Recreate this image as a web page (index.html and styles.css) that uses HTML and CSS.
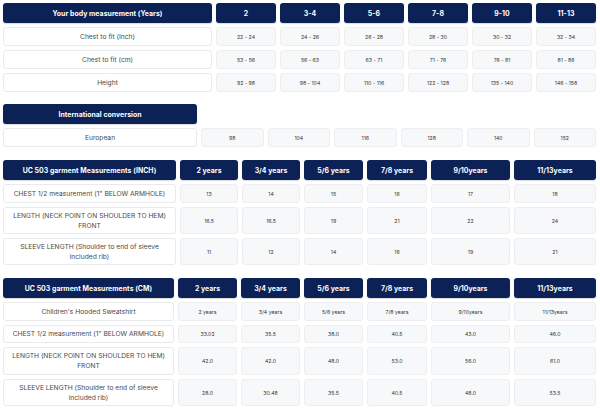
FILE: index.html
```html
<!DOCTYPE html>
<html>
<head>
<meta charset="utf-8">
<link rel="stylesheet" href="styles.css">
</head>
<body>
<div class="page">
  <div class="tbl t1">
    <div class="c h">Your body measurement (Years)</div>
    <div class="c h">2</div><div class="c h">3-4</div><div class="c h">5-6</div><div class="c h">7-8</div><div class="c h">9-10</div><div class="c h">11-13</div>
    <div class="c l">Chest to fit (Inch)</div>
    <div class="c v">22 - 24</div><div class="c v">24 - 26</div><div class="c v">26 - 28</div><div class="c v">28 - 30</div><div class="c v">30 - 32</div><div class="c v">32 - 34</div>
    <div class="c l">Chest to fit (cm)</div>
    <div class="c v">53 - 56</div><div class="c v">56 - 63</div><div class="c v">63 - 71</div><div class="c v">71 - 76</div><div class="c v">76 - 81</div><div class="c v">81 - 86</div>
    <div class="c l">Height</div>
    <div class="c v">92 - 98</div><div class="c v">98 - 104</div><div class="c v">110 - 116</div><div class="c v">122 - 128</div><div class="c v">135 - 140</div><div class="c v">146 - 158</div>
  </div>

  <div class="tbl t2">
    <div class="c h">International conversion</div>
    <div class="blank"></div><div class="blank"></div><div class="blank"></div><div class="blank"></div><div class="blank"></div><div class="blank"></div>
    <div class="c l">European</div>
    <div class="c v">98</div><div class="c v">104</div><div class="c v">116</div><div class="c v">128</div><div class="c v">140</div><div class="c v">152</div>
  </div>

  <div class="tbl t3">
    <div class="c h">UC 503 garment Measurements (INCH)</div>
    <div class="c h">2 years</div><div class="c h">3/4 years</div><div class="c h">5/6 years</div><div class="c h">7/8 years</div><div class="c h">9/10years</div><div class="c h">11/13years</div>
    <div class="c l">CHEST 1/2 measurement (1" BELOW ARMHOLE)</div>
    <div class="c v">13</div><div class="c v">14</div><div class="c v">15</div><div class="c v">16</div><div class="c v">17</div><div class="c v">18</div>
    <div class="c l two">LENGTH (NECK POINT ON SHOULDER TO HEM)<br>FRONT</div>
    <div class="c v">16.5</div><div class="c v">16.5</div><div class="c v">19</div><div class="c v">21</div><div class="c v">22</div><div class="c v">24</div>
    <div class="c l two">SLEEVE LENGTH (Shoulder to end of sleeve<br>included rib)</div>
    <div class="c v">11</div><div class="c v">12</div><div class="c v">14</div><div class="c v">16</div><div class="c v">19</div><div class="c v">21</div>
  </div>

  <div class="tbl t4">
    <div class="c h">UC 503 garment Measurements (CM)</div>
    <div class="c h">2 years</div><div class="c h">3/4 years</div><div class="c h">5/6 years</div><div class="c h">7/8 years</div><div class="c h">9/10years</div><div class="c h">11/13years</div>
    <div class="c l">Children's Hooded Sweatshirt</div>
    <div class="c v">2 years</div><div class="c v">3/4 years</div><div class="c v">5/6 years</div><div class="c v">7/8 years</div><div class="c v">9/10years</div><div class="c v">11/13years</div>
    <div class="c l">CHEST 1/2 measurement (1" BELOW ARMHOLE)</div>
    <div class="c v">33.02</div><div class="c v">35.5</div><div class="c v">38.0</div><div class="c v">40.5</div><div class="c v">43.0</div><div class="c v">46.0</div>
    <div class="c l two">LENGTH (NECK POINT ON SHOULDER TO HEM)<br>FRONT</div>
    <div class="c v">42.0</div><div class="c v">42.0</div><div class="c v">48.0</div><div class="c v">53.0</div><div class="c v">56.0</div><div class="c v">61.0</div>
    <div class="c l two">SLEEVE LENGTH (Shoulder to end of sleeve<br>included rib)</div>
    <div class="c v">28.0</div><div class="c v">30.48</div><div class="c v">35.5</div><div class="c v">40.5</div><div class="c v">48.0</div><div class="c v">53.5</div>
  </div>
</div>
</body>
</html>
```

FILE: styles.css
```css
* { box-sizing: border-box; }
html, body { margin: 0; padding: 0; background: #ffffff; }
body { font-family: Inter, "Liberation Sans", sans-serif; }
.page {
  width: 600px;
  padding: 3px 4px 0 3px;
  display: flex;
  flex-direction: column;
}
.tbl {
  display: grid;
  gap: 4px;
  width: 593px;
}
.t1 {
  grid-template-columns: 209px repeat(6, 60px);
  grid-template-rows: 20px 19px 19px 19px;
}
.t2 {
  margin-top: 12px;
  grid-template-columns: 194px repeat(6, 1fr);
  grid-template-rows: 20px 19px;
}
.t3 {
  margin-top: 13px;
  grid-template-columns: 173px 58px 58px 59px 60px 79px 82px;
  grid-template-rows: 20px 19px 27px 27px;
}
.t4 {
  margin-top: 13px;
  grid-template-columns: 171px 59px 59px 59px 60px 79px 82px;
  grid-template-rows: 20px 19px 18px 28px 27px;
}
.c {
  display: flex;
  align-items: center;
  justify-content: center;
  text-align: center;
  border-radius: 3px;
}
.h {
  background: #0c2256;
  color: #ffffff;
  font-weight: 700;
  font-size: 6.9px;
  letter-spacing: 0.05px;
  box-shadow: 0 1px 1px rgba(0, 0, 0, 0.15);
}
.l {
  background: #ffffff;
  border: 1px solid #e9eaec;
  color: #4a4a4a;
  font-size: 6.7px;
  line-height: 10px;
}
.v {
  background: #f7f8f9;
  border: 1px solid #eceef0;
  color: #333333;
  font-size: 5.2px;
}
```
